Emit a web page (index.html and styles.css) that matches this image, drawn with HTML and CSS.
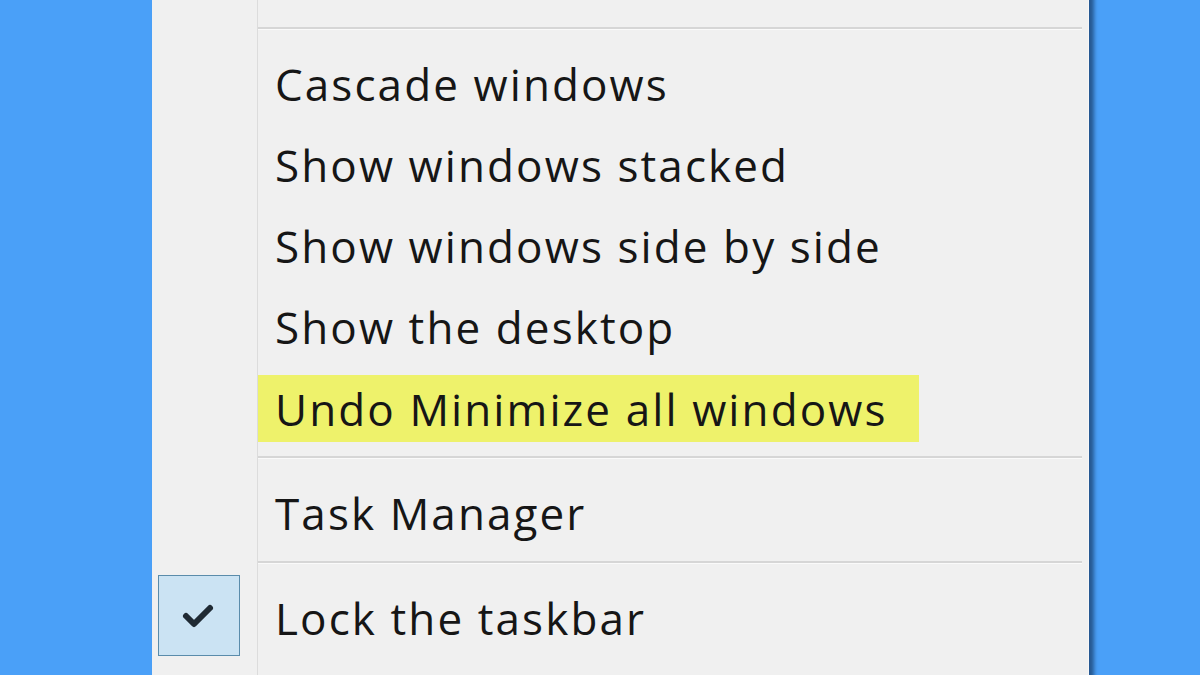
FILE: index.html
```html
<!DOCTYPE html>
<html>
<head>
<meta charset="utf-8">
<link rel="stylesheet" href="styles.css">
</head>
<body>
<div class="menu">
  <div class="row item ghost"><div class="gutter"></div><div class="label"><span>Toolbars</span></div></div>
  <div class="row sep"><div class="gutter"></div><div class="line"></div></div>
  <div class="row item"><div class="gutter"></div><div class="label"><span>Cascade windows</span></div></div>
  <div class="row item"><div class="gutter"></div><div class="label"><span>Show windows stacked</span></div></div>
  <div class="row item"><div class="gutter"></div><div class="label"><span>Show windows side by side</span></div></div>
  <div class="row item"><div class="gutter"></div><div class="label"><span>Show the desktop</span></div></div>
  <div class="row item"><div class="gutter"></div><div class="label hl"><span>Undo Minimize all windows</span></div></div>
  <div class="row sep"><div class="gutter"></div><div class="line"></div></div>
  <div class="row item"><div class="gutter"></div><div class="label"><span>Task Manager</span></div></div>
  <div class="row sep"><div class="gutter"></div><div class="line"></div></div>
  <div class="row item"><div class="gutter"><div class="check"><svg width="40" height="30" viewBox="0 0 40 30"><path d="M7 15 L15 23 L31 7" fill="none" stroke="#1f2a33" stroke-width="6" stroke-linecap="round" stroke-linejoin="round"/></svg></div></div><div class="label"><span>Lock the taskbar</span></div></div>
  <div class="row item"><div class="gutter"></div><div class="label"><span></span></div></div>
</div>
</body>
</html>
```
FILE: styles.css
```css
html, body {
  margin: 0;
  padding: 0;
  width: 1200px;
  height: 675px;
  overflow: hidden;
  background: #4aa0f8;
}
.menu {
  margin-left: 152px;
  margin-top: -65px;
  width: 936px;
  background: #f0f0f0;
  border-right: 1px solid #f7f7f7;
  box-shadow: 5px 0 4px rgba(10, 30, 60, 0.55);
  font-family: "Open Sans", "Noto Sans", sans-serif;
  font-size: 44px;
  letter-spacing: 2.1px;
  color: #161616;
}
.row {
  display: flex;
}
.gutter {
  width: 105px;
  flex: none;
  align-self: stretch;
  border-right: 1px solid #dcdcdc;
  display: flex;
  align-items: flex-start;
}
.item {
  height: 81px;
}
.sep {
  height: 24px;
  align-items: center;
}
.line {
  flex: 1;
  height: 2px;
  background: #d6d6d6;
  margin-right: 6px;
  border-bottom: 1px solid #fafafa;
}
.label {
  display: flex;
  align-items: center;
  padding-left: 17px;
  padding-top: 6px;
  box-sizing: border-box;
  height: 81px;
}
.label span {
  line-height: 1;
  white-space: nowrap;
}
.hl {
  align-self: flex-start;
  margin-top: 11px;
  height: 67px;
  padding-top: 0;
  padding-right: 31px;
  background: #eef26b;
}
.ghost .label span {
  color: #e2e2e2;
}
.check {
  width: 80px;
  height: 79px;
  margin-left: 6px;
  margin-top: 1px;
  background: #cbe3f3;
  border: 1px solid #5a8cab;
  display: flex;
  align-items: center;
  justify-content: center;
}
```
